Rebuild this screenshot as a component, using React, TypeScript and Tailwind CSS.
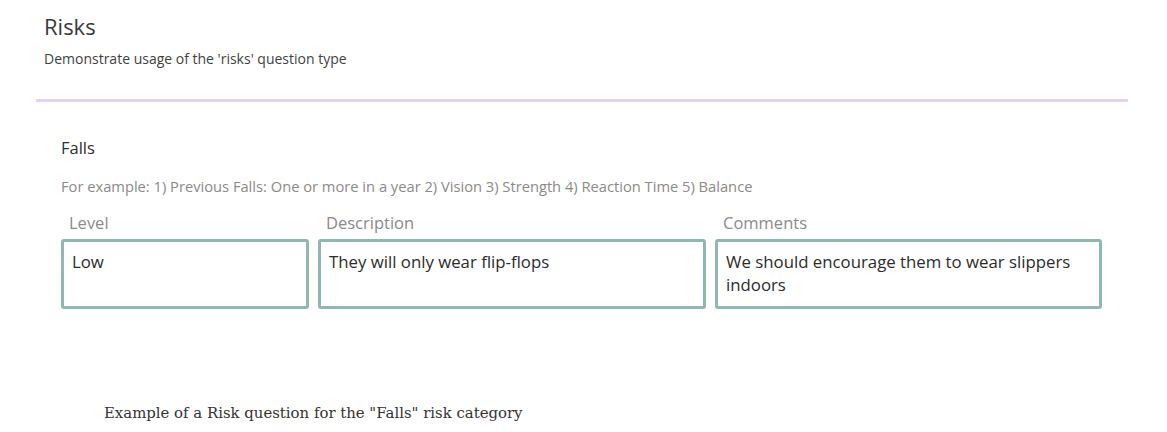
import React from 'react';

type RiskField = {
  label: string;
  value: string;
  width: string;
};

const fields: RiskField[] = [
  { label: 'Level', value: 'Low', width: 'w-[248px]' },
  { label: 'Description', value: 'They will only wear flip-flops', width: 'w-[388px]' },
  { label: 'Comments', value: 'We should encourage them to wear slippers indoors', width: 'w-[387px]' },
];

const RiskColumn = ({ label, value, width }: RiskField) => {
  return (
    <div className={`flex flex-col ${width}`}>
      <span className="px-2 text-[16.5px] leading-[24px] text-[#8a8a8a]">{label}</span>
      <div className="mt-[4px] h-[70px] rounded-[3px] border-[3px] border-[#8fb8b2] bg-white px-2 pt-[8px] text-[16.8px] leading-[23px] text-[#2b2b2b]">
        {value}
      </div>
    </div>
  );
};

export default function App() {
  return (
    <div className="w-[1167px] h-[432px] bg-white font-['Open_Sans',sans-serif] overflow-hidden">
      <div className="px-[44px] pt-[11px]">
        <h1 className="text-[22px] leading-[30px] text-[#3a3a3a]">Risks</h1>
        <p className="mt-[8px] text-[14px] leading-[20px] text-[#3f3f3f]">
          Demonstrate usage of the 'risks' question type
        </p>
      </div>

      <div className="mx-[36px] mt-[30px] h-[3px] w-[1092px] bg-[#e4d3ee]" />

      <div className="px-[61px] pt-[34px]">
        <h2 className="text-[16.5px] leading-[24px] text-[#2e2e2e]">Falls</h2>
        <p className="mt-[15px] text-[14.7px] leading-[22px] text-[#8a8a8a]">
          For example: 1) Previous Falls: One or more in a year 2) Vision 3) Strength 4) Reaction Time 5) Balance
        </p>
        <div className="mt-[14px] flex gap-[9px]">
          {fields.map((f) => (
            <RiskColumn key={f.label} {...f} />
          ))}
        </div>
      </div>

      <p className="mt-[93px] pl-[104px] font-['DejaVu_Serif',serif] text-[14.9px] leading-[22px] text-[#333]">
        Example of a Risk question for the "Falls" risk category
      </p>
    </div>
  );
}
